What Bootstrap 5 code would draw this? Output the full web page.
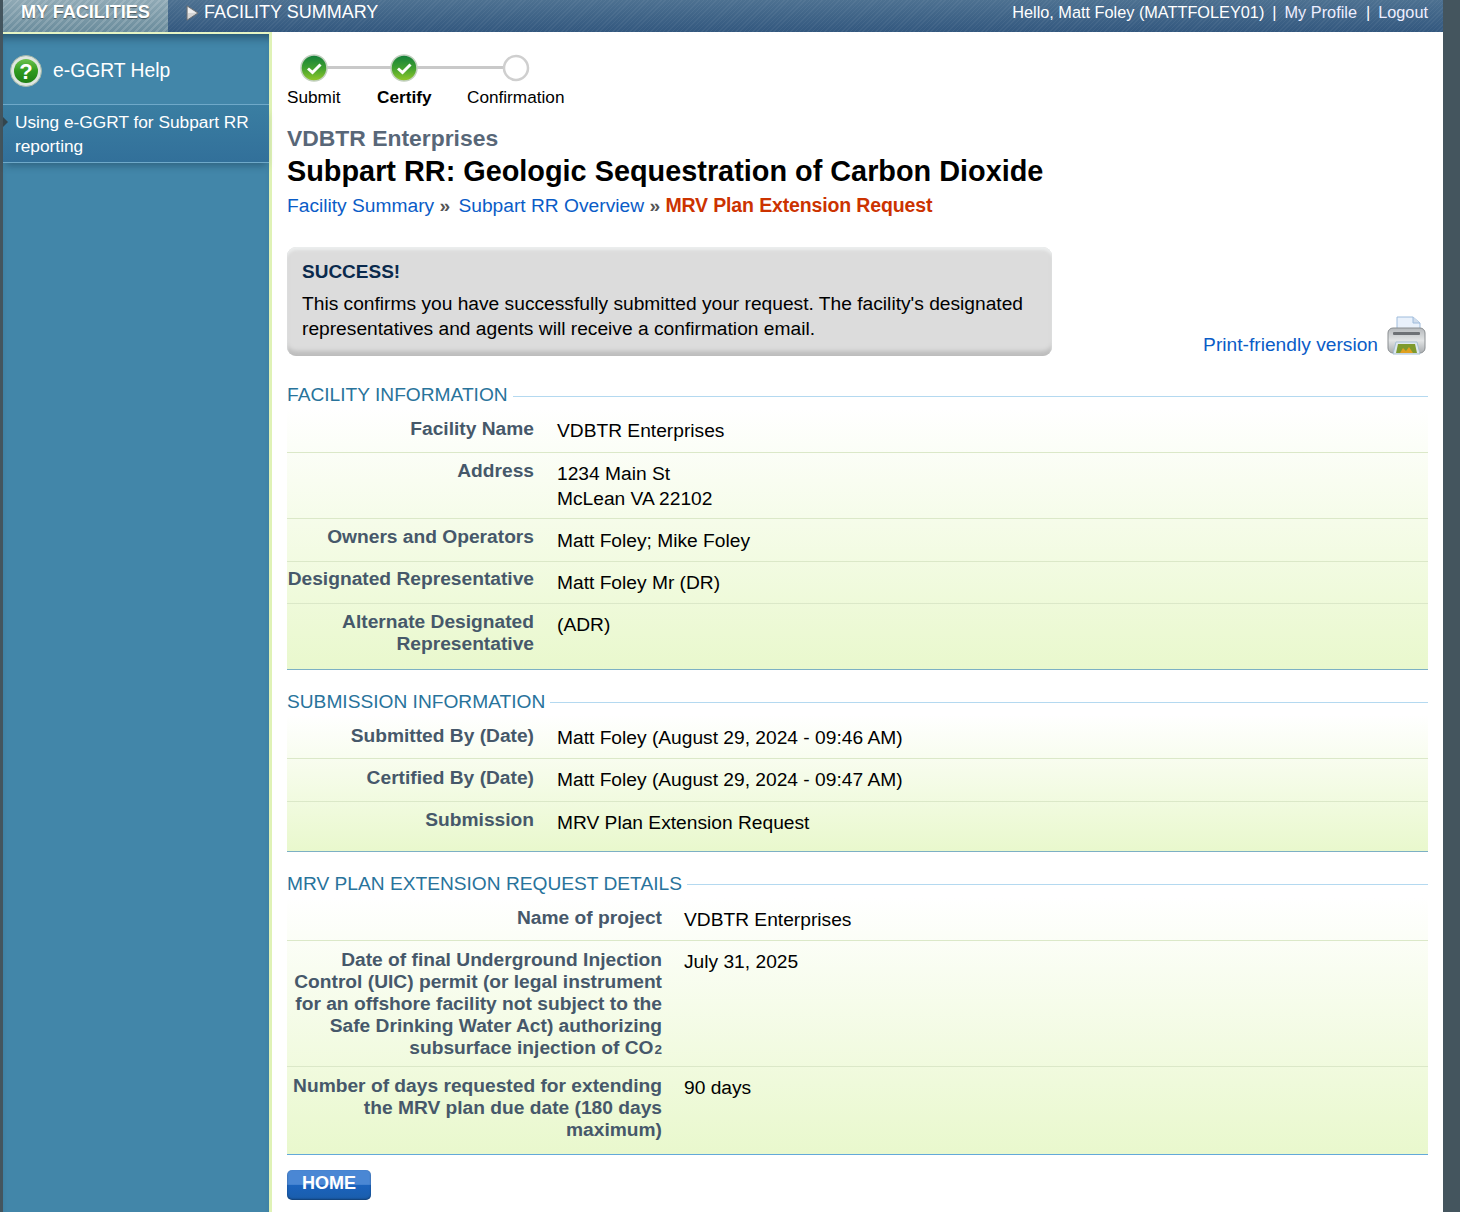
<!DOCTYPE html>
<html lang="en">
<head>
<meta charset="utf-8">
<title>Facility Summary</title>
<link href="https://cdn.jsdelivr.net/npm/bootstrap@5.3.0/dist/css/bootstrap.min.css" rel="stylesheet">
<style>
html,body{height:100%}
body{margin:0;background:#44555e;font-family:"Liberation Sans",Arial,sans-serif;color:#000;overflow:hidden}
.shell{width:1440px;margin-left:3px;height:1212px;background:#fff;display:flex;flex-direction:column}
.topbar{height:32px;flex:none;background:repeating-linear-gradient(135deg,rgba(255,255,255,.05) 0 1px,transparent 1px 3px),linear-gradient(#4d7191,#33587f);color:#fff;line-height:25px}
.topbar a{color:#eef;text-decoration:none}
.tab-main{width:165px;background:repeating-linear-gradient(135deg,rgba(255,255,255,.14) 0 2px,transparent 2px 5px),linear-gradient(#8fa9b5,#6a8c9c);font-weight:700;font-size:18.2px;color:#fff;padding-left:18px;text-shadow:0 1px 1px rgba(0,0,0,.45);letter-spacing:-.1px}
.tab-sub{padding-left:18px;font-size:18px}
.tab-tri{margin-right:5px;margin-top:-7px;flex:none}
.tab-sub-text{margin-top:-7px}
.bar-user{padding-right:15px;font-size:16.3px}
.bar-sep{margin:0 8px}
.bar-sep-wide{margin-left:9px}
.body-wrap{flex:1;min-height:0}
.side{width:266px;flex:none;background:#4286a9;border-top:2px solid #e6f5c4;color:#fff;box-shadow:inset 0 10px 8px -6px rgba(20,50,70,.55);position:relative}
.side-strip{width:3px;flex:none;background:#dff2b6}
.side-head{height:71px;font-size:19.3px;border-bottom:1px solid #6fa9c9;padding-left:7px;padding-top:3px;gap:11px}
.help-text{margin-top:-1px;padding-top:3px}
.side-item{position:relative;padding:5px 12px 4px;font-size:17.3px;line-height:24px;background:linear-gradient(#3a7ea2,#32709a);border-bottom:1px solid #6fa9c9;box-shadow:0 6px 7px -3px rgba(20,50,70,.4)}
.side-item::before{content:"";position:absolute;left:0;top:12px;border-left:5px solid #33454d;border-top:5px solid transparent;border-bottom:5px solid transparent}
.main-col{flex:1;min-width:0;padding:22px 15px 0 15px}
.steps{height:54px;position:relative;width:300px;font-size:17.2px}
.step-line{position:absolute;top:12px;height:3px;background:#c9c9c9;left:40px;width:200px}
.step-node{position:absolute;top:0;width:28px;height:28px;line-height:0}
.node-a{left:13px}.node-b{left:103px}.node-c{left:215px}
.step-label{position:absolute;top:33px;white-space:nowrap;line-height:20px}
.lab-a{left:0}.lab-b{left:90px}.lab-c{left:180px}
.org{font-size:22.9px;font-weight:700;color:#586778;line-height:30px;margin-top:15px}
.title-main{font-size:28.85px;font-weight:700;line-height:36px;margin:0;color:#000}
.crumbs{font-size:19.2px;line-height:26px;margin-top:3px}
.crumbs a{color:#0a5cc7;text-decoration:none}
.crumbs .raquo{color:#555;font-weight:700}
.crumbs .raquo-gap{margin-right:3px}
.crumbs .now{color:#cc3300;font-weight:700;font-size:19.5px;letter-spacing:-.14px}
.notice-row{margin-top:28px;align-items:flex-end}
.notice{width:765px;height:109px;background:#dcdcdc;border-radius:9px;padding:12px 15px 0;box-shadow:inset 0 3px 3px #eceeee,inset 0 -6px 4px -1px #bdbdbd;font-size:19.2px;line-height:25px}
.notice-title{font-size:19px;font-weight:700;color:#0a2a4d;line-height:25px;margin-bottom:7px}
.print-link{font-size:19.2px;color:#0a5cc7;text-decoration:none;line-height:24px;margin-bottom:-1px}
.print-wrap{padding-right:1px;gap:9px}
.sec-head{font-size:19.17px;color:#28739b;line-height:24px;display:flex;align-items:center}
.sec-head::after{content:"";flex:1;height:1px;background:#b4d9f0;margin-left:5px;margin-top:3px}
.sec-one{margin-top:27px}
.sec-two,.sec-three{margin-top:20px}
.sec-two::after,.sec-three::after{margin-top:1px}
.info-box{border-bottom:1px solid #7cb0c4;background:linear-gradient(#fff,#e9f8cd);margin-top:1px}
.info-box.blue-end{border-bottom-color:#63a9d9}
.info-row{display:flex;border-bottom:1px solid #dbe8c8}
.info-row:last-child{border-bottom:0}
.lbl{flex:none;width:247px;text-align:right;font-size:19.2px;font-weight:700;color:#46586a;line-height:22px}
.val{padding-left:23px;font-size:19.2px;line-height:25px}
.wide .lbl{width:375px}
.wide .val{padding-left:22px}
.l-name{padding-top:10px;padding-bottom:12px}
.v-name{padding-top:10px;padding-bottom:9px}
.l-addr{padding-top:7px}
.v-addr{padding-top:9px;padding-bottom:7px;line-height:24.5px}
.l-own{padding-top:7px}
.v-own{padding-top:9px;padding-bottom:8px}
.l-dr{padding-top:6px}
.v-dr{padding-top:8px;padding-bottom:8px}
.l-adr{padding-top:7px;padding-bottom:14px}
.v-adr{padding-top:8px}
.l-sub{padding-top:10px}
.v-sub{padding-top:10px;padding-bottom:8px}
.l-cert{padding-top:8px}
.v-cert{padding-top:8px;padding-bottom:9px}
.l-kind{padding-top:7px}
.v-kind{padding-top:8px;padding-bottom:16px}
.l-proj{padding-top:10px;padding-bottom:11px}
.v-proj{padding-top:10px;padding-bottom:8px}
.l-date{padding-top:8px;padding-bottom:7px}
.v-date{padding-top:8px}
.l-days{padding-top:8px;padding-bottom:13px}
.v-days{padding-top:8px}
.line-last{white-space:nowrap}
.co-sub{font-size:13.500px;margin-left:1px;line-height:0}
.home-btn{display:inline-block;margin-top:15px;width:84px;height:30px;line-height:27px;border:0;border-radius:5px;padding:0;text-align:center;color:#fff;font-size:18px;font-weight:700;background:linear-gradient(#4a87d4 0 48%,#1b63bd 50%,#1a5dab);box-shadow:inset 0 -1px 2px rgba(0,0,0,.35)}
.home-btn:hover{color:#fff;background:linear-gradient(#4a87d4 0 48%,#1b63bd 50%,#1a5dab)}
</style>
</head>
<body>
<div class="shell">
  <div class="topbar d-flex align-items-stretch">
    <div class="tab-main">MY FACILITIES</div>
    <div class="tab-sub d-flex align-items-center flex-grow-1">
      <svg class="tab-tri" width="13" height="16" viewBox="0 0 13 16"><path d="M1 .8v14.400l11-7.200z" fill="#d4d4d4" stroke="#6b6f72"/><path d="M2 2.500v5.500l8-.2z" fill="#f0f0f0"/></svg>
      <span class="tab-sub-text">FACILITY SUMMARY</span>
    </div>
    <div class="bar-user"><span>Hello, Matt Foley (MATTFOLEY01)</span><span class="bar-sep">|</span><a href="#">My Profile</a><span class="bar-sep bar-sep-wide">|</span><a href="#">Logout</a></div>
  </div>
  <div class="body-wrap d-flex">
    <aside class="side">
      <div class="side-head d-flex align-items-center">
        <svg width="32" height="32" viewBox="0 0 32 32"><defs><linearGradient id="qg" x1="0" y1="0" x2="0" y2="1"><stop offset="0" stop-color="#6cc24e"/><stop offset=".5" stop-color="#2f9a1e"/><stop offset="1" stop-color="#1f7f14"/></linearGradient></defs><circle cx="16" cy="16" r="15.500" fill="#dfe6e0" stroke="#9fb5a8"/><circle cx="16" cy="16" r="12" fill="url(#qg)"/><text x="16" y="23.500" text-anchor="middle" font-family="Liberation Sans" font-weight="700" font-size="22" fill="#fff">?</text></svg>
        <span class="help-text">e-GGRT Help</span>
      </div>
      <div class="side-item">Using e-GGRT for Subpart RR reporting</div>
    </aside>
    <div class="side-strip"></div>
    <main class="main-col">
      <div class="steps">
        <div class="step-line"></div>
        <div class="step-node node-a"><svg width="28" height="28" viewBox="0 0 28 28"><defs><linearGradient id="g1" x1="0" y1="0" x2="0" y2="1"><stop offset="0" stop-color="#137f3a"/><stop offset=".5" stop-color="#3fa030"/><stop offset="1" stop-color="#93c92a"/></linearGradient></defs><circle cx="14" cy="14" r="13" fill="url(#g1)" stroke="#c2d0bf" stroke-width="1.500"/><path d="M8 14.500l4.500 4 8-8" fill="none" stroke="#fff" stroke-width="3"/></svg></div>
        <div class="step-node node-b"><svg width="28" height="28" viewBox="0 0 28 28"><circle cx="14" cy="14" r="13" fill="url(#g1)" stroke="#c2d0bf" stroke-width="1.500"/><path d="M8 14.500l4.500 4 8-8" fill="none" stroke="#fff" stroke-width="3"/></svg></div>
        <div class="step-node node-c"><svg width="28" height="28" viewBox="0 0 28 28"><circle cx="14" cy="14" r="12" fill="#fff" stroke="#cfcfcf" stroke-width="2.500"/></svg></div>
        <span class="step-label lab-a">Submit</span>
        <span class="step-label lab-b fw-bold">Certify</span>
        <span class="step-label lab-c">Confirmation</span>
      </div>
      <div class="org">VDBTR Enterprises</div>
      <h1 class="title-main">Subpart RR: Geologic Sequestration of Carbon Dioxide</h1>
      <div class="crumbs"><a href="#">Facility Summary</a> <span class="raquo raquo-gap">»</span> <a href="#">Subpart RR Overview</a> <span class="raquo">»</span> <span class="now">MRV Plan Extension Request</span></div>
      <div class="notice-row d-flex justify-content-between">
        <div class="notice">
          <div class="notice-title">SUCCESS!</div>
          <div>This confirms you have successfully submitted your request. The facility's designated representatives and agents will receive a confirmation email.</div>
        </div>
        <div class="print-wrap d-flex align-items-end">
          <a href="#" class="print-link">Print-friendly version</a>
          <svg width="40" height="40" viewBox="0 0 40 40"><defs><linearGradient id="pb" x1="0" y1="0" x2="0" y2="1"><stop offset="0" stop-color="#b5b9bc"/><stop offset=".5" stop-color="#e2e4e5"/><stop offset="1" stop-color="#a9adb0"/></linearGradient></defs><path d="M10 1h16l7 6v9H10z" fill="#e9f1fb" stroke="#9fbcdc"/><path d="M26 1v6h7" fill="#cfdcec" stroke="#9fbcdc"/><rect x="1" y="12" width="37" height="25" rx="5" fill="url(#pb)" stroke="#8a8e91"/><rect x="6" y="16" width="27" height="3" rx="1" fill="#6d7175"/><path d="M6 38l3-12h21l3 12z" fill="#dfe8ee" stroke="#a7c0d4"/><path d="M9 37l2-9h17l2 9z" fill="#7e9a2e"/><path d="M13 37l3-5 3 3 3-4 4 6z" fill="#e0a020"/></svg>
        </div>
      </div>

      <div class="sec-head sec-one">FACILITY INFORMATION</div>
      <div class="info-box">
        <div class="info-row"><div class="lbl l-name">Facility Name</div><div class="val v-name">VDBTR Enterprises</div></div>
        <div class="info-row"><div class="lbl l-addr">Address</div><div class="val v-addr">1234 Main St<br>McLean VA 22102</div></div>
        <div class="info-row"><div class="lbl l-own">Owners and Operators</div><div class="val v-own">Matt Foley; Mike Foley</div></div>
        <div class="info-row"><div class="lbl l-dr">Designated Representative</div><div class="val v-dr">Matt Foley Mr (DR)</div></div>
        <div class="info-row"><div class="lbl l-adr">Alternate Designated Representative</div><div class="val v-adr">(ADR)</div></div>
      </div>

      <div class="sec-head sec-two">SUBMISSION INFORMATION</div>
      <div class="info-box">
        <div class="info-row"><div class="lbl l-sub">Submitted By (Date)</div><div class="val v-sub">Matt Foley (August 29, 2024 - 09:46 AM)</div></div>
        <div class="info-row"><div class="lbl l-cert">Certified By (Date)</div><div class="val v-cert">Matt Foley (August 29, 2024 - 09:47 AM)</div></div>
        <div class="info-row"><div class="lbl l-kind">Submission</div><div class="val v-kind">MRV Plan Extension Request</div></div>
      </div>

      <div class="sec-head sec-three">MRV PLAN EXTENSION REQUEST DETAILS</div>
      <div class="info-box wide blue-end">
        <div class="info-row"><div class="lbl l-proj">Name of project</div><div class="val v-proj">VDBTR Enterprises</div></div>
        <div class="info-row"><div class="lbl l-date"><span>Date of final Underground Injection Control (UIC) permit (or legal instrument for an offshore facility not subject to the Safe Drinking Water Act) authorizing</span> <span class="line-last">subsurface injection of CO</span><span class="co-sub">2</span></div><div class="val v-date">July 31, 2025</div></div>
        <div class="info-row"><div class="lbl l-days">Number of days requested for extending the MRV plan due date (180 days maximum)</div><div class="val v-days">90 days</div></div>
      </div>
      <a href="#" class="btn home-btn">HOME</a>
    </main>
  </div>
</div>
<script src="https://cdn.jsdelivr.net/npm/bootstrap@5.3.0/dist/js/bootstrap.bundle.min.js"></script>
</body>
</html>
